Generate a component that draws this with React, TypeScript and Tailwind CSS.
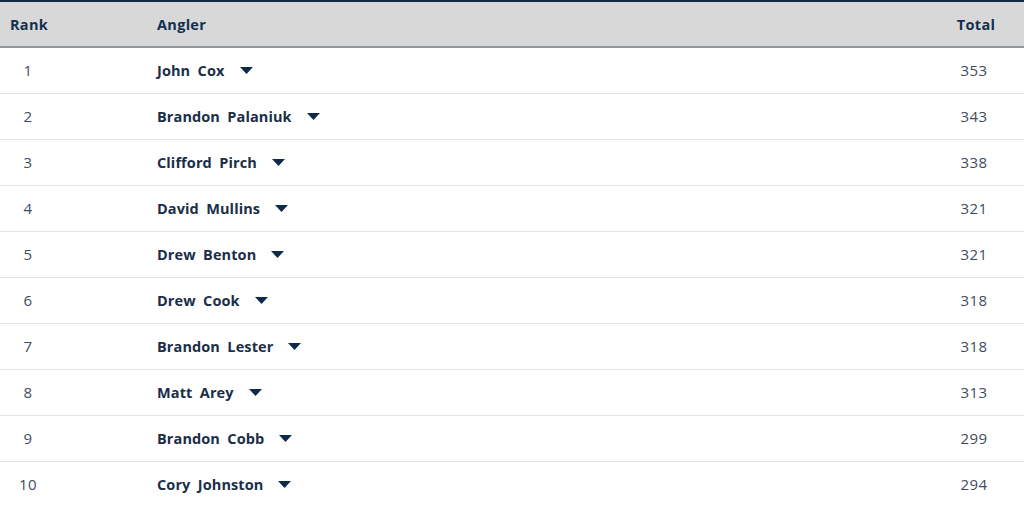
const anglers = [
  { rank: 1, name: "John Cox", total: 353 },
  { rank: 2, name: "Brandon Palaniuk", total: 343 },
  { rank: 3, name: "Clifford Pirch", total: 338 },
  { rank: 4, name: "David Mullins", total: 321 },
  { rank: 5, name: "Drew Benton", total: 321 },
  { rank: 6, name: "Drew Cook", total: 318 },
  { rank: 7, name: "Brandon Lester", total: 318 },
  { rank: 8, name: "Matt Arey", total: 313 },
  { rank: 9, name: "Brandon Cobb", total: 299 },
  { rank: 10, name: "Cory Johnston", total: 294 },
];

function Caret() {
  return (
    <svg width="13" height="7" viewBox="0 0 13 7" className="ml-[15px] shrink-0">
      <path d="M0 0h13L6.5 7z" fill="#0e2a4b" />
    </svg>
  );
}

export default function App() {
  return (
    <div className="w-[1024px] h-[506px] overflow-hidden bg-white font-['Open_Sans',sans-serif]">
      <div className="flex items-center h-[48px] pt-px bg-[#d8d8d8] border-t-2 border-t-[#142b45] border-b-2 border-b-[#8e98a3] text-[14.5px] tracking-[0.3px] font-bold text-[#13304f]">
        <div className="w-[157px] pl-[10px]">Rank</div>
        <div className="flex-1">Angler</div>
        <div className="w-[60px] mr-[18px] text-center">Total</div>
      </div>
      {anglers.map((a) => (
        <div
          key={a.rank}
          className="flex items-center h-[46px] border-b border-[#e3e3e3] text-[15px]"
        >
          <div className="w-[157px]">
            <div className="w-[56px] text-center tracking-[0.5px] text-[#3f4c5e]">{a.rank}</div>
          </div>
          <div className="flex-1 flex items-center text-[14.5px] tracking-[0.1px] [word-spacing:3.5px] font-bold text-[#1b2e48]">
            {a.name}
            <Caret />
          </div>
          <div className="w-[60px] mr-[20px] text-center tracking-[0.5px] text-[#3f4c5e]">{a.total}</div>
        </div>
      ))}
    </div>
  );
}
